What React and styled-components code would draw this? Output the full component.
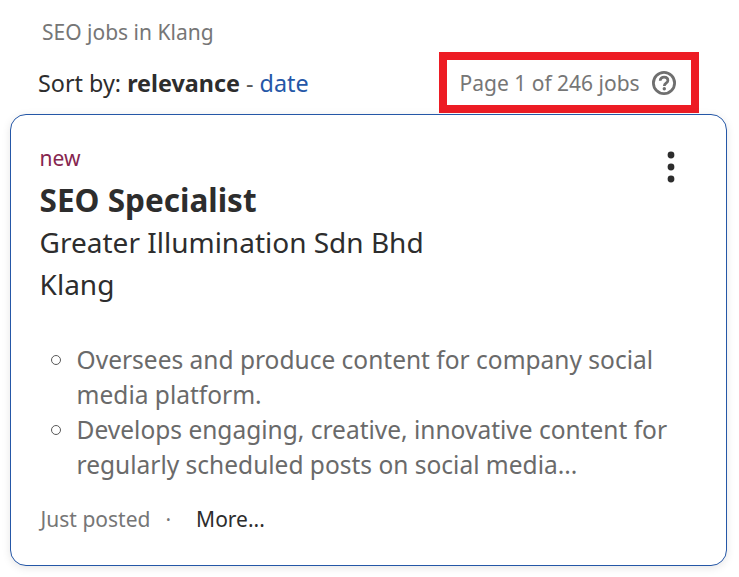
import React from "react";
import styled, { createGlobalStyle } from "styled-components";

const Global = createGlobalStyle`
  html, body { margin: 0; padding: 0; background: #fff; }
  body { font-family: "Noto Sans", sans-serif; color: #2d2d2d; }
`;
const Page = styled.div`
  width: 739px;
  height: 577px;
  overflow: hidden;
  padding: 18px 12px 0 10px;
  box-sizing: border-box;
`;
const Crumb = styled.div`
  font-size: 21px;
  line-height: 28px;
  color: #767676;
  margin-left: 32px;
`;
const TopRow = styled.div`
  display: flex;
  align-items: center;
  justify-content: space-between;
  height: 61px;
  margin-top: 6px;
  margin-bottom: 1px;
  padding: 0 28px 0 28px;
`;
const Sort = styled.div`
  font-size: 23.33px;
  line-height: 32px;
  margin-top: 1px;
`;
const Relevance = styled.b`
  font-weight: 700;
`;
const Dash = styled.span`
  color: #595959;
`;
const DateLink = styled.span`
  color: #2557a7;
`;
const PageBox = styled.div`
  width: 260px;
  height: 61px;
  box-sizing: border-box;
  border: 8px solid #ed1c24;
  display: flex;
  align-items: center;
  padding-left: 12.5px;
  gap: 12px;
  font-size: 21px;
  color: #767676;
`;
const Card = styled.div`
  width: 717px;
  height: 452px;
  box-sizing: border-box;
  border: 1px solid #2557a7;
  border-radius: 16px;
  padding: 28px 29px 0 28.6px;
  position: relative;
  box-shadow: 0 2px 8px rgba(0, 0, 0, 0.1);
  background: #fff;
`;
const Badge = styled.div`
  font-size: 21px;
  line-height: 30px;
  color: #86264f;
`;
const Title = styled.div`
  font-size: 31.5px;
  line-height: 42px;
  font-weight: 700;
  margin-top: 6px;
`;
const Meta = styled.div`
  font-size: 28px;
  line-height: 42px;
`;
const Menu = styled.svg`
  position: absolute;
  top: 36px;
  right: 51px;
`;
const Bullets = styled.ul`
  list-style: none;
  margin: 37px 0 0 0;
  padding: 0 0 0 37px;
`;
const Bullet = styled.li`
  position: relative;
  font-size: 24.5px;
  line-height: 35px;
  color: #6a6a6a;
  width: 620px;
  &::before {
    content: "";
    position: absolute;
    left: -26px;
    top: 13px;
    width: 8px;
    height: 8px;
    border: 1.5px solid #595959;
    border-radius: 50%;
  }
`;
const Foot = styled.div`
  display: flex;
  align-items: center;
  font-size: 21px;
  line-height: 28px;
  margin: 23px 0 0 1px;
`;
const Posted = styled.span`
  color: #767676;
`;
const Dot = styled.span`
  color: #767676;
  margin: 0 25px 0 15px;
`;
const More = styled.span`
  color: #2d2d2d;
`;

const Help = () => (
  <svg width="24" height="24" viewBox="0 0 24 24" fill="none" stroke="#6f6f6f">
    <circle cx="12" cy="12" r="10.6" strokeWidth="2.8" />
    <path d="M8.2 9.8c0-2.3 1.7-3.6 3.9-3.6s3.8 1.2 3.8 3.3c0 2.7-3.6 2.7-3.6 5.4" strokeWidth="2.7" />
    <circle cx="12.3" cy="17.8" r="1.7" fill="#6f6f6f" stroke="none" />
  </svg>
);

export default function App() {
  return (
    <Page>
      <Global />
      <Crumb>SEO jobs in Klang</Crumb>
      <TopRow>
        <Sort>
          Sort by: <Relevance>relevance</Relevance> <Dash>-</Dash> <DateLink>date</DateLink>
        </Sort>
        <PageBox>
          Page 1 of 246 jobs
          <Help />
        </PageBox>
      </TopRow>
      <Card>
        <Badge>new</Badge>
        <Title>SEO Specialist</Title>
        <Meta>Greater Illumination Sdn Bhd</Meta>
        <Meta>Klang</Meta>
        <Menu width="8" height="32" viewBox="0 0 8 32" fill="#2d2d2d">
          <circle cx="4" cy="4" r="3.4" />
          <circle cx="4" cy="16" r="3.4" />
          <circle cx="4" cy="28" r="3.4" />
        </Menu>
        <Bullets>
          <Bullet>Oversees and produce content for company social media platform.</Bullet>
          <Bullet>Develops engaging, creative, innovative content for regularly scheduled posts on social media...</Bullet>
        </Bullets>
        <Foot>
          <Posted>Just posted</Posted>
          <Dot>·</Dot>
          <More>More...</More>
        </Foot>
      </Card>
    </Page>
  );
}
